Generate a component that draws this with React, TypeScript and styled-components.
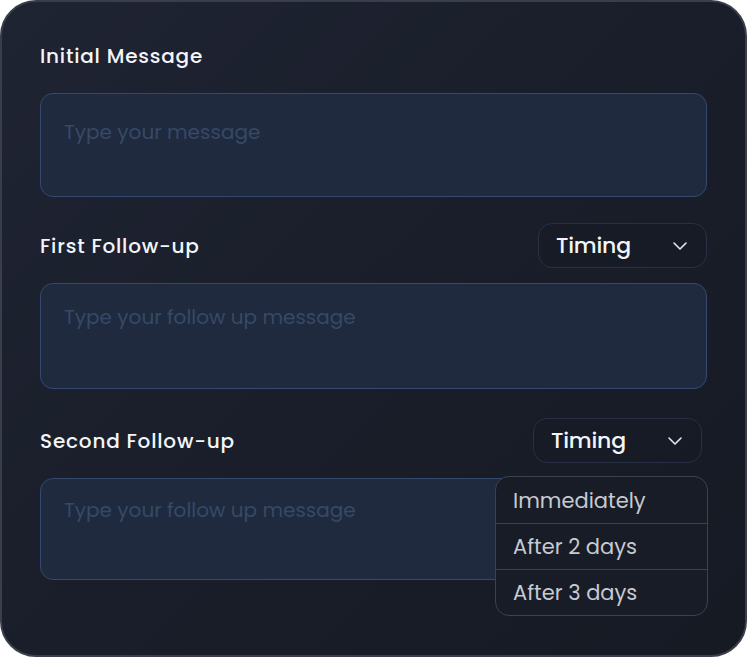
import styled, { createGlobalStyle } from "styled-components";
import { ChevronDown } from "lucide-react";

const GlobalStyle = createGlobalStyle`
  html, body {
    margin: 0;
    padding: 0;
    background: #ffffff;
  }
  * {
    box-sizing: border-box;
  }
`;

const FONT = `"Poppins", "Inter", "Liberation Sans", sans-serif`;

type FieldConfig = {
  label: string;
  placeholder: string;
  timing?: boolean;
  height: number;
  padTop: number;
  spaceBefore: number;
  shift?: number;
  open?: boolean;
};

const fields: FieldConfig[] = [
  { label: "Initial Message", placeholder: "Type your message", height: 104, padTop: 23, spaceBefore: 0 },
  { label: "First Follow-up", placeholder: "Type your follow up message", timing: true, height: 106, padTop: 18, spaceBefore: 26 },
  { label: "Second Follow-up", placeholder: "Type your follow up message", timing: true, height: 102, padTop: 16, spaceBefore: 29, shift: 5, open: true },
];

const options = ["Immediately", "After 2 days", "After 3 days"];

function App() {
  return (
    <>
      <GlobalStyle />
      <Card>
        {fields.map((f) => (
          <Field key={f.label} spaceBefore={f.spaceBefore}>
            <Header>
              <Label>{f.label}</Label>
              {f.timing && (
                <SelectWrap shift={f.shift ?? 0}>
                  <Select>
                    <span>Timing</span>
                    <ChevronDown size={24} strokeWidth={1.6} />
                  </Select>
                  {f.open && (
                    <Menu>
                      {options.map((o) => (
                        <Option key={o}>{o}</Option>
                      ))}
                    </Menu>
                  )}
                </SelectWrap>
              )}
            </Header>
            <MessageBox
              placeholder={f.placeholder}
              boxHeight={f.height}
              padTop={f.padTop}
            />
          </Field>
        ))}
      </Card>
    </>
  );
}

const Card = styled.div`
  width: 747px;
  height: 657px;
  border: 2px solid #3a3e4a;
  border-radius: 36px;
  background: linear-gradient(135deg, #1f2433 0%, #1a1e2a 50%, #161a23 100%);
  padding: 31px 38px 0 38px;
  display: flex;
  flex-direction: column;
  font-family: ${FONT};
`;

const Field = styled.section<{ spaceBefore: number }>`
  display: flex;
  flex-direction: column;
  gap: 15px;
  margin-top: ${(p) => p.spaceBefore}px;
`;

const Header = styled.div`
  display: flex;
  align-items: center;
  justify-content: space-between;
  min-height: 45px;
`;

const Label = styled.h3`
  margin: 0;
  font-size: 20px;
  font-weight: 500;
  letter-spacing: 0.8px;
  color: #f4f5f8;
  line-height: 30px;
`;

const SelectWrap = styled.div<{ shift: number }>`
  position: relative;
  margin-right: ${(p) => p.shift}px;
`;

const Select = styled.button`
  display: flex;
  align-items: center;
  justify-content: space-between;
  width: 169px;
  height: 45px;
  padding: 0 14px 0 17px;
  border: 1px solid #283044;
  border-radius: 14px;
  background: rgba(22, 26, 36, 0.6);
  color: #f4f5f8;
  font-family: ${FONT};
  font-size: 22px;
  font-weight: 500;
  letter-spacing: -0.2px;
  cursor: pointer;

  svg {
    color: #e6e8ee;
  }
`;

const Menu = styled.ul`
  position: absolute;
  top: calc(100% + 13px);
  right: -6px;
  width: 213px;
  margin: 0;
  padding: 0;
  list-style: none;
  border: 1px solid #3a4151;
  border-radius: 14px;
  background: #181c27;
  overflow: hidden;
  z-index: 2;
`;

const Option = styled.li`
  height: 46px;
  display: flex;
  align-items: center;
  padding: 0 17px;
  font-size: 21px;
  font-weight: 400;
  color: #c7cad2;

  & + & {
    border-top: 1px solid #3a4151;
  }
`;

const MessageBox = styled.textarea<{ boxHeight: number; padTop: number }>`
  width: 100%;
  height: ${(p) => p.boxHeight}px;
  resize: none;
  padding: ${(p) => p.padTop}px 23px 0 23px;
  border: 1.5px solid #34496d;
  border-radius: 13px;
  background: #1f2a3e;
  color: #e8ebf2;
  font-family: ${FONT};
  font-size: 20px;
  line-height: 30px;
  outline: none;

  &::placeholder {
    color: #364966;
  }
`;

export default App;
